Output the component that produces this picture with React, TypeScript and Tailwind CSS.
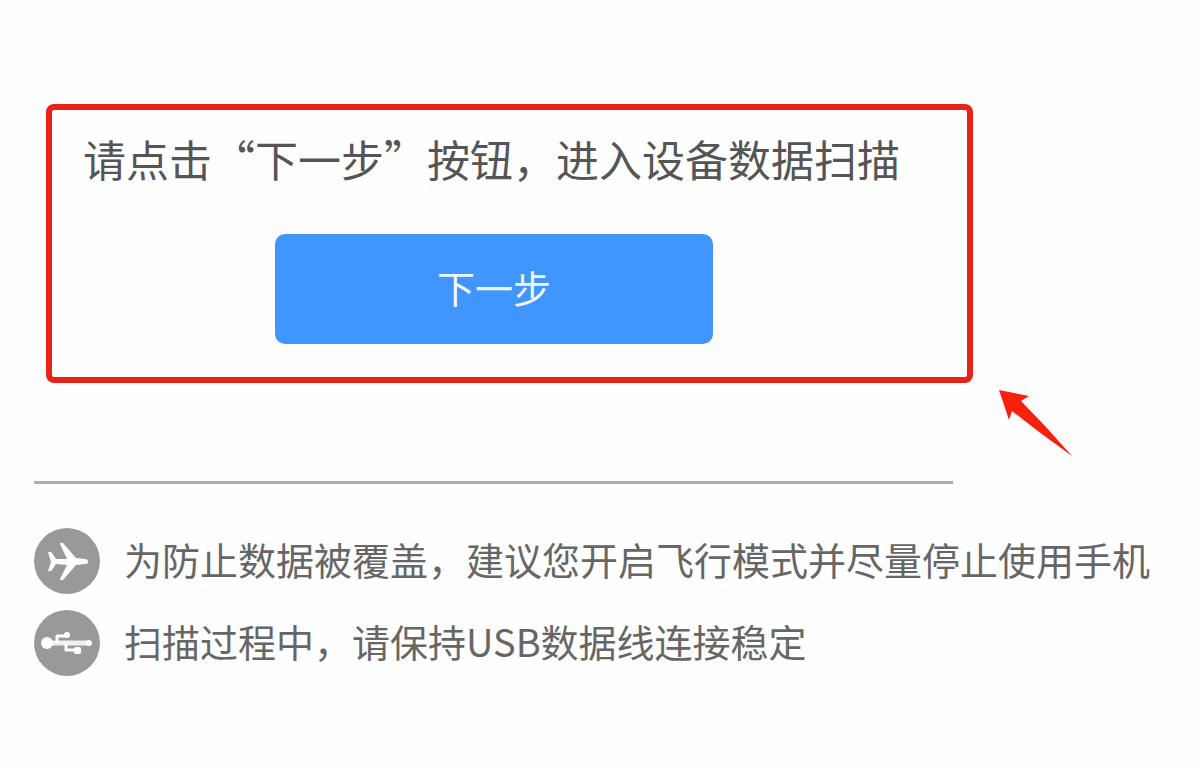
import React from 'react';

const PlaneIcon: React.FC = () => (
  <svg viewBox="0 0 66 66" className="w-[66px] h-[66px] shrink-0" aria-hidden="true">
    <circle cx="33" cy="33" r="33" fill="#999" />
    <path
      d="M14 24 Q16 23 18 25 L22 31 L33 31 L26 16 Q26 14 29 15 L42 30 L51 31 Q54 31 54 34 Q54 36 51 36 L42 37 L29 52 Q26 53 26 51 L33 37 L22 36 L18 42 Q16 44 14 43 L17 34 Z"
      fill="#fff"
    />
  </svg>
);

const UsbIcon: React.FC = () => (
  <svg viewBox="0 0 66 66" className="w-[66px] h-[66px] shrink-0" aria-hidden="true">
    <circle cx="33" cy="33" r="33" fill="#999" />
    <g fill="none" stroke="#fff" strokeWidth="3" strokeLinejoin="round">
      <path d="M14 33 H55" strokeWidth="5" strokeOpacity="0.85" />
      <path d="M23 33 V26 H33" />
      <path d="M32 33 V40 H44" />
    </g>
    <circle cx="13" cy="33" r="6" fill="#fff" />
    <circle cx="33" cy="25" r="3" fill="#fff" />
    <rect x="40" y="37" width="7" height="7" rx="2" fill="#fff" />
    <circle cx="55" cy="33" r="3" fill="#fff" />
  </svg>
);

const notes = [
  { icon: PlaneIcon, text: '为防止数据被覆盖，建议您开启飞行模式并尽量停止使用手机' },
  { icon: UsbIcon, text: '扫描过程中，请保持USB数据线连接稳定' },
];

export default function App() {
  return (
    <main
      lang="zh-CN"
      className="min-h-screen bg-[#fefefe] pl-[34px] pr-4 pt-[104px] pb-20 font-['Noto_Sans_CJK_SC',sans-serif]"
    >
      <section className="relative ml-3 max-w-[927px] rounded-lg border-6 border-[#e8231a] px-[31px] pt-4 pb-[33px]">
        <h1 className="text-[43px] leading-[64px] text-[#555]">请点击“下一步”按钮，进入设备数据扫描</h1>
        <div className="mt-11 flex max-w-[822px] justify-center">
          <button
            type="button"
            className="h-[110px] w-[438px] rounded-[10px] bg-[#4095ff] pb-1 text-[38px] leading-[56px] text-[#eef8ff] hover:bg-[#3488f5]"
          >
            下一步
          </button>
        </div>
        {/* arrow pointing at the highlighted step */}
        <svg
          viewBox="0 0 74 68"
          className="absolute left-full top-full ml-8 mt-3 h-[68px] w-[74px]"
          aria-hidden="true"
        >
          <path d="M0 1 L30 7 L22 12 L47 38 L73 67 L40 43 L13 22 L10 31 Z" fill="#f8200f" />
        </svg>
      </section>

      <hr className="mt-[98px] max-w-[919px] border-t-3 border-[#adafae]" />

      <ul className="mt-11 space-y-4 text-[#666]">
        {notes.map(({ icon: Icon, text }) => (
          <li key={text} className="flex items-center gap-6">
            <Icon />
            <span className="pb-1 text-[38px] leading-[56px]">{text}</span>
          </li>
        ))}
      </ul>
    </main>
  );
}
